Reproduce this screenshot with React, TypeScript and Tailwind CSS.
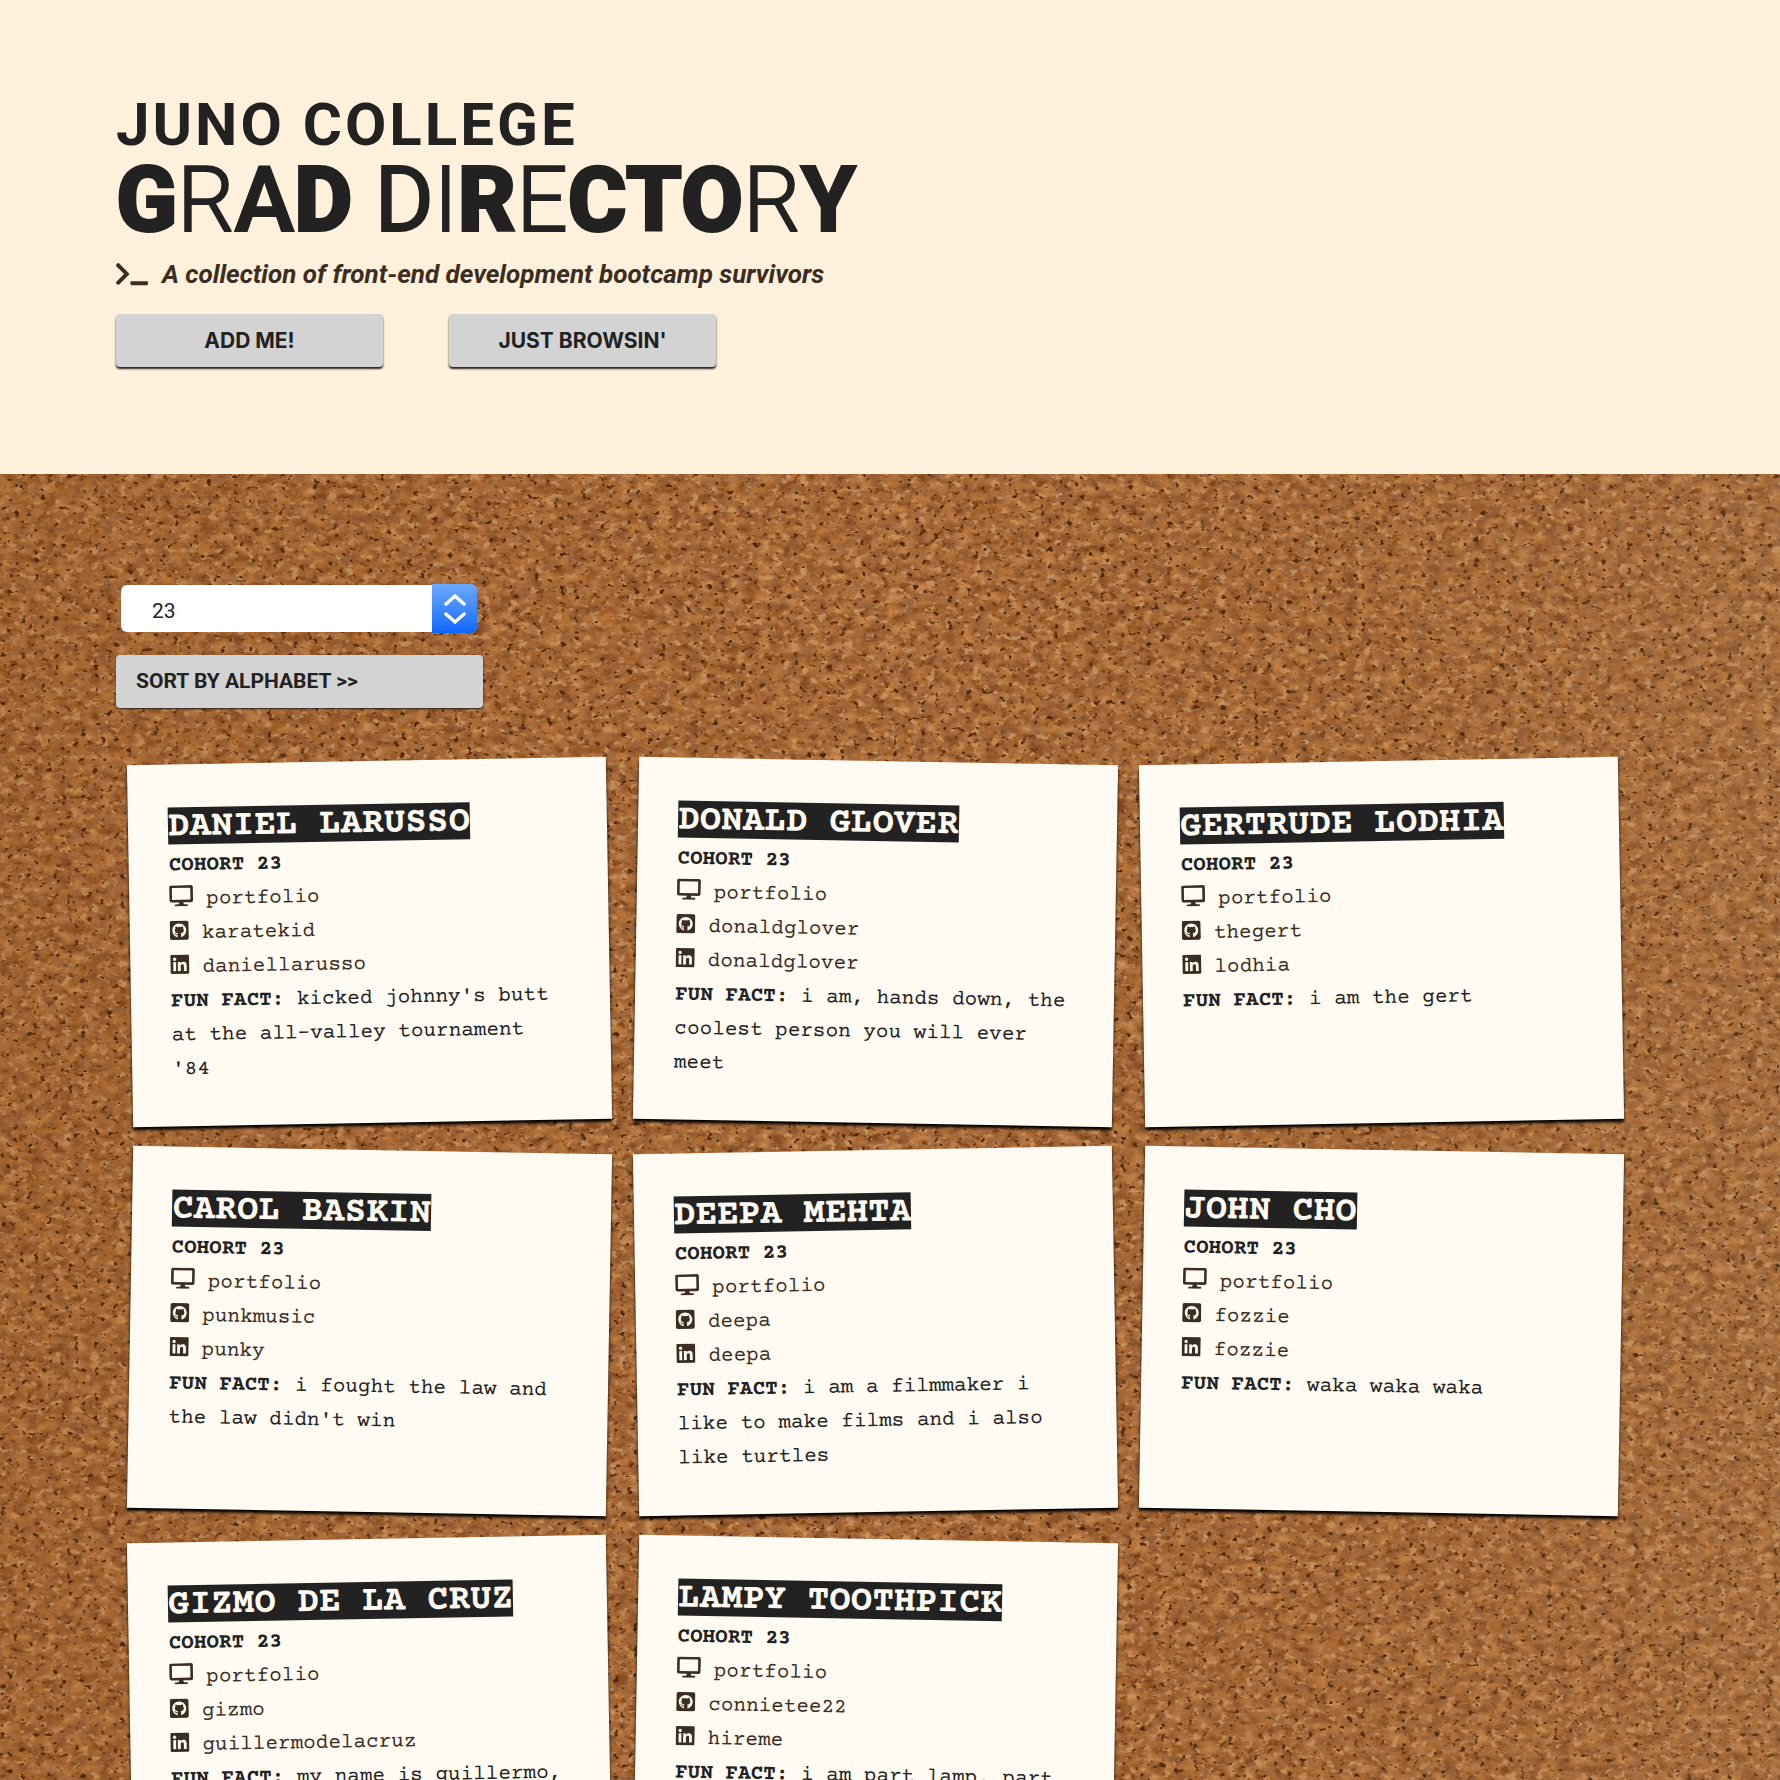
import React from "react";
import { FaDesktop, FaGithubSquare, FaLinkedin, FaTerminal } from "react-icons/fa";

type Grad = {
  name: string;
  github: string;
  linkedin: string;
  fact: string;
};

const grads: Grad[] = [
  { name: "Daniel Larusso", github: "karatekid", linkedin: "daniellarusso", fact: "kicked johnny's butt at the all-valley tournament '84" },
  { name: "Donald Glover", github: "donaldglover", linkedin: "donaldglover", fact: "i am, hands down, the coolest person you will ever meet" },
  { name: "Gertrude Lodhia", github: "thegert", linkedin: "lodhia", fact: "i am the gert" },
  { name: "Carol Baskin", github: "punkmusic", linkedin: "punky", fact: "i fought the law and the law didn't win" },
  { name: "Deepa Mehta", github: "deepa", linkedin: "deepa", fact: "i am a filmmaker i like to make films and i also like turtles" },
  { name: "John Cho", github: "fozzie", linkedin: "fozzie", fact: "waka waka waka" },
  { name: "Gizmo De La Cruz", github: "gizmo", linkedin: "guillermodelacruz", fact: "my name is guillermo," },
  { name: "Lampy Toothpick", github: "connietee22", linkedin: "hireme", fact: "i am part lamp, part" },
];

function CorkTexture() {
  return (
    <svg aria-hidden="true" className="pointer-events-none absolute inset-0 h-full w-full">
      <defs>
        <linearGradient id="light" x1="0" y1="0" x2="1" y2="0">
          <stop offset="0" stopColor="#7a4312" stopOpacity="0.14" />
          <stop offset="0.5" stopColor="#7a4312" stopOpacity="0" />
          <stop offset="1" stopColor="#a88a60" stopOpacity="0.16" />
        </linearGradient>
        <filter id="cork" x="0" y="0" width="100%" height="100%" colorInterpolationFilters="sRGB">
          <feTurbulence type="fractalNoise" baseFrequency="0.07 0.1" numOctaves="4" seed="3" result="grain" />
          <feColorMatrix
            in="grain"
            type="matrix"
            values="0.34 0.12 0 0 0.42  0.26 0.16 0 0 0.2  0.12 0.2 0 0 0.06  0 0 0 0 1"
            result="base"
          />
          <feTurbulence type="fractalNoise" baseFrequency="0.11 0.15" numOctaves="3" seed="21" result="chipNoise" />
          <feColorMatrix
            in="chipNoise"
            type="matrix"
            values="0 0 0 0 0.78  0 0 0 0 0.57  0 0 0 0 0.36  0 6 0 0 -3.4"
            result="chips"
          />
          <feColorMatrix
            in="chipNoise"
            type="matrix"
            values="0 0 0 0 0.5  0 0 0 0 0.27  0 0 0 0 0.1  -5 0 0 0 2"
            result="shades"
          />
          <feTurbulence type="fractalNoise" baseFrequency="0.15 0.19" numOctaves="2" seed="8" result="speckNoise" />
          <feColorMatrix
            in="speckNoise"
            type="matrix"
            values="0 0 0 0 0.3  0 0 0 0 0.15  0 0 0 0 0.05  0 -9 0 0 3.2"
            result="specks"
          />
          <feMerge>
            <feMergeNode in="base" />
            <feMergeNode in="chips" />
            <feMergeNode in="shades" />
            <feMergeNode in="specks" />
          </feMerge>
        </filter>
      </defs>
      <rect width="100%" height="100%" filter="url(#cork)" />
      <rect width="100%" height="100%" fill="url(#light)" />
    </svg>
  );
}

function GradCard({ grad, tilt }: { grad: Grad; tilt: string }) {
  return (
    <li
      className={`min-h-[362px] bg-[#fffaf2] px-10 pt-[43px] pb-8 text-[21px] leading-[34px] text-[#222] shadow-[0_3px_3px_#000] ${tilt}`}
    >
      <h2 className="mb-[5px] flex">
        <span className="bg-[#222] pt-[3px] text-[36px] leading-[34px] font-bold text-[#fffaf2] uppercase">{grad.name}</span>
      </h2>
      <p className="font-bold">COHORT 23</p>
      <p>
        <a href="#portfolio" className="text-[#3b2d22]">
          <FaDesktop className="mr-[13px] inline h-[21px] w-6 align-[-2px]" />
          portfolio
        </a>
      </p>
      <p>
        <a href="#github" className="text-[#3b2d22]">
          <FaGithubSquare className="mr-[13px] inline h-[22px] w-[19px] align-[-3px]" />
          {grad.github}
        </a>
      </p>
      <p>
        <a href="#linkedin" className="text-[#3b2d22]">
          <FaLinkedin className="mr-[13px] inline h-[22px] w-[19px] align-[-3px]" />
          {grad.linkedin}
        </a>
      </p>
      <p>
        <span className="font-bold">FUN FACT:</span> {grad.fact}
      </p>
    </li>
  );
}

export default function App() {
  return (
    <div className="font-['Roboto',sans-serif] text-[#222]">
      <header className="bg-[#fff1db] px-[116px] pt-[91px] pb-[107px]">
        <h1>
          <span className="block text-[60px] leading-[68px] font-bold tracking-wider">JUNO COLLEGE</span>
          <span className="block text-[90px] leading-[84px] [-webkit-text-stroke:2px_#222]">
            <span className="font-black">G</span>
            <span className="font-light">R</span>
            <span className="font-medium">A</span>
            <span className="font-black">D</span> <span className="font-normal">D</span>
            <span className="font-light">I</span>
            <span className="font-black">R</span>
            <span className="font-light">E</span>
            <span className="font-black">CTO</span>
            <span className="font-light">R</span>
            <span className="font-bold">Y</span>
          </span>
        </h1>
        <p className="mt-[15px] flex items-center gap-[14px] text-[26px] leading-8 font-bold text-[#3b2d22] italic">
          <FaTerminal className="h-[26px] w-8" />
          A collection of front-end development bootcamp survivors
        </p>
        <div className="mt-6 flex gap-[66px] font-['Inter',sans-serif] text-[21px] font-bold">
          <button className="h-[53px] w-[267px] rounded-[4px] bg-[#d3d3d3] shadow-[0_2px_2px_#222]">ADD ME!</button>
          <button className="h-[53px] w-[267px] rounded-[4px] bg-[#d3d3d3] shadow-[0_2px_2px_#222]">JUST BROWSIN'</button>
        </div>
      </header>

      <main className="relative bg-[#a8672f] px-[116px] pt-[110px] pb-20">
        <CorkTexture />
        <div className="relative">
          <div className="relative ml-[5px] h-[49px] w-[356px]">
            <select
              aria-label="Cohort"
              defaultValue="23"
              className="my-px h-[47px] w-full appearance-none rounded-[6px] bg-white pt-[4px] pl-[31px] text-[21px] leading-8"
            >
              <option>23</option>
            </select>
            <span className="pointer-events-none absolute inset-y-0 right-0 flex w-[45px] items-center justify-center rounded-r-[6px] bg-linear-to-b from-[#6ba8ff] to-[#0a66ff]">
              <svg width="22" height="32" viewBox="0 0 22 32" fill="none" stroke="white" strokeWidth="3.5" strokeLinecap="round">
                <path d="M2 11 11 3l9 8M2 21l9 8 9-8" />
              </svg>
            </span>
          </div>
          <button className="mt-[22px] h-[53px] w-[367px] rounded-[4px] bg-[#d3d3d3] px-5 text-left text-[21px] font-bold shadow-[0_1px_2px_#222]">
            SORT BY ALPHABET &gt;&gt;
          </button>
          <ul className="mt-[53px] grid grid-cols-3 gap-[27px] pr-[43px] pl-[14px] font-['Courier_Prime','Liberation_Mono',monospace]">
            {grads.map((grad, i) => (
              <GradCard key={grad.name} grad={grad} tilt={i % 2 === 0 ? "-rotate-1" : "rotate-1"} />
            ))}
          </ul>
        </div>
      </main>
    </div>
  );
}
